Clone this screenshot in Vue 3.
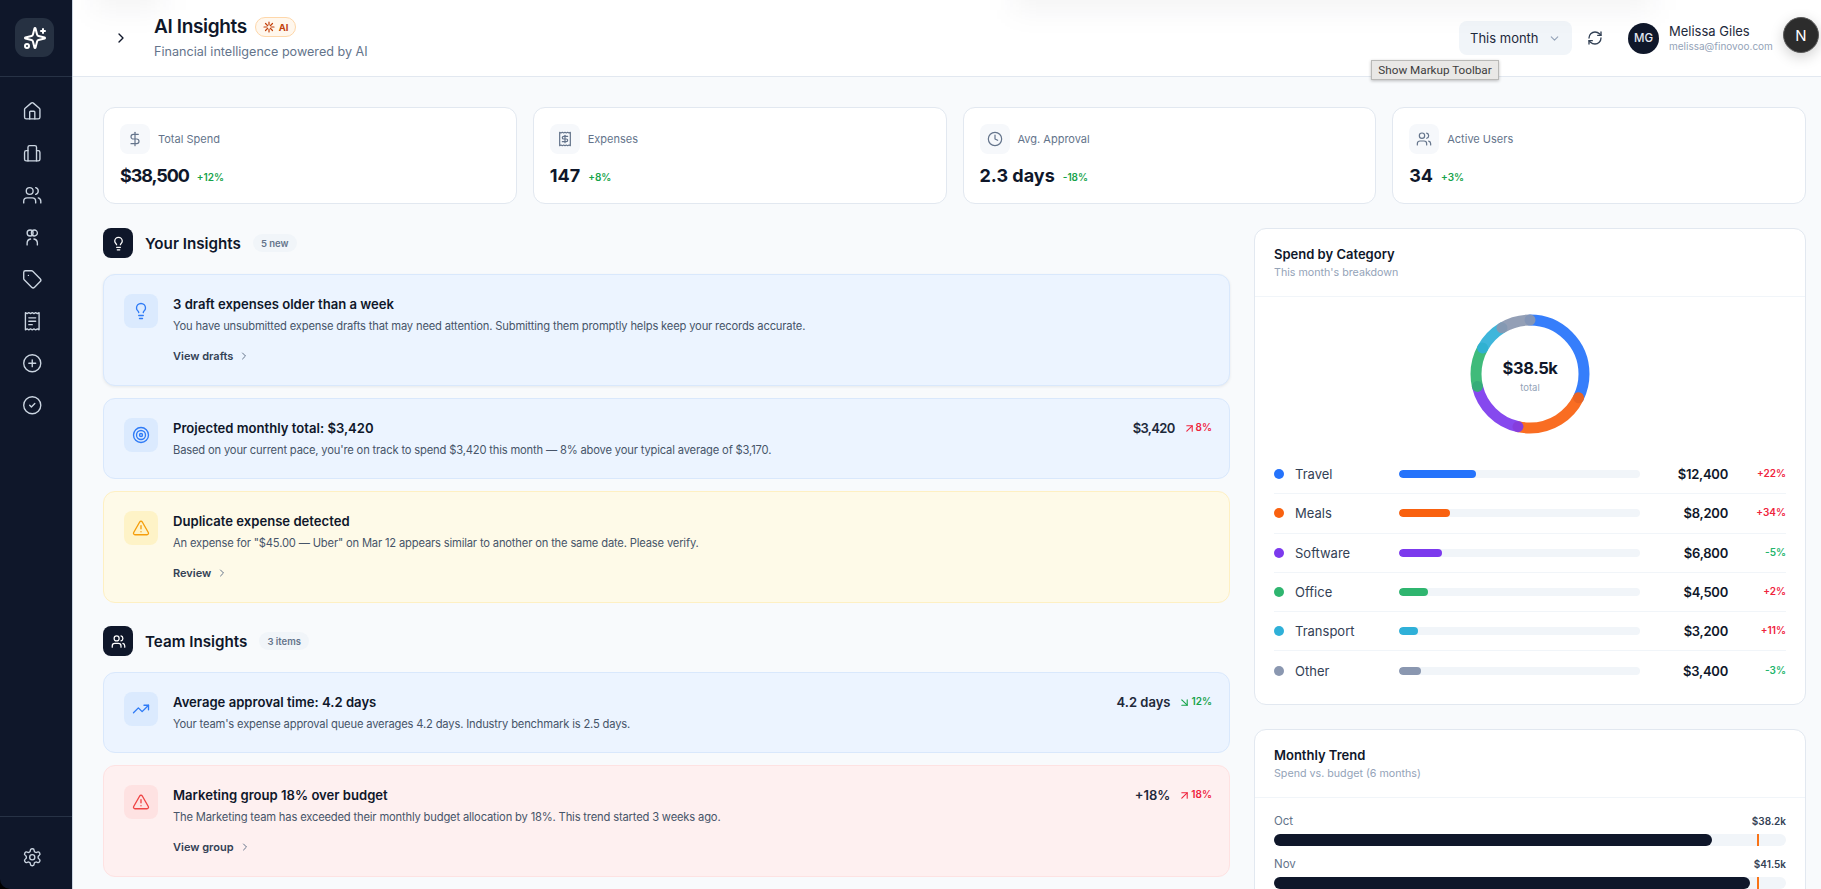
<script setup>
import { h } from 'vue'

const c = (x, y, r) => `M${x - r} ${y}a${r} ${r} 0 1 0 ${2 * r} 0a${r} ${r} 0 1 0 ${-2 * r} 0`
const receiptOutline = 'M4 2v20l2-1 2 1 2-1 2 1 2-1 2 1 2-1 2 1V2l-2 1-2-1-2 1-2-1-2 1-2-1-2 1Z'
const usersPaths = ['M16 21v-2a4 4 0 0 0-4-4H6a4 4 0 0 0-4 4v2', c(9, 7, 4), 'M22 21v-2a4 4 0 0 0-3-3.87', 'M16 3.13a4 4 0 0 1 0 7.75']
const alertPaths = ['m21.73 18-8-14a2 2 0 0 0-3.48 0l-8 14A2 2 0 0 0 4 21h16a2 2 0 0 0 1.73-3', 'M12 9v4', 'M12 17h.01']
const icons = {
  house: ['M15 21v-8a1 1 0 0 0-1-1h-4a1 1 0 0 0-1 1v8', 'M3 10a2 2 0 0 1 .709-1.528l7-5.999a2 2 0 0 1 2.582 0l7 5.999A2 2 0 0 1 21 10v9a2 2 0 0 1-2 2H5a2 2 0 0 1-2-2z'],
  suite: ['M9 3h6a2 2 0 0 1 2 2v16H7V5a2 2 0 0 1 2-2z', 'M7 9H5a2 2 0 0 0-2 2v8a2 2 0 0 0 2 2h2', 'M17 9h2a2 2 0 0 1 2 2v8a2 2 0 0 1-2 2h-2'],
  users: usersPaths,
  groups: [c(9.5, 7, 3.5), c(14.5, 7, 3.5), 'M6 21v-2a5 5 0 0 1 4-4.9', 'M18 21v-2a5 5 0 0 0-4-4.9'],
  tag: ['M12.586 2.586A2 2 0 0 0 11.172 2H4a2 2 0 0 0-2 2v7.172a2 2 0 0 0 .586 1.414l8.704 8.704a2.426 2.426 0 0 0 3.42 0l6.58-6.58a2.426 2.426 0 0 0 0-3.42z', 'M7.5 7.5h.01'],
  receipt: [receiptOutline, 'M16 8H8', 'M16 12H8', 'M12 16H8'],
  plus: [c(12, 12, 10), 'M8 12h8', 'M12 8v8'],
  check: [c(12, 12, 10), 'm9 12 2 2 4-4'],
  settings: ['M12.22 2h-.44a2 2 0 0 0-2 2v.18a2 2 0 0 1-1 1.73l-.43.25a2 2 0 0 1-2 0l-.15-.08a2 2 0 0 0-2.73.73l-.22.38a2 2 0 0 0 .73 2.73l.15.1a2 2 0 0 1 1 1.72v.51a2 2 0 0 1-1 1.74l-.15.09a2 2 0 0 0-.73 2.73l.22.38a2 2 0 0 0 2.73.73l.15-.08a2 2 0 0 1 2 0l.43.25a2 2 0 0 1 1 1.73V20a2 2 0 0 0 2 2h.44a2 2 0 0 0 2-2v-.18a2 2 0 0 1 1-1.73l.43-.25a2 2 0 0 1 2 0l.15.08a2 2 0 0 0 2.73-.73l.22-.39a2 2 0 0 0-.73-2.73l-.15-.08a2 2 0 0 1-1-1.74v-.5a2 2 0 0 1 1-1.74l.15-.09a2 2 0 0 0 .73-2.73l-.22-.38a2 2 0 0 0-2.73-.73l-.15.08a2 2 0 0 1-2 0l-.43-.25a2 2 0 0 1-1-1.73V4a2 2 0 0 0-2-2z', c(12, 12, 3)],
  logo: ['M9.937 15.5A2 2 0 0 0 8.5 14.063l-6.135-1.582a.5.5 0 0 1 0-.962L8.5 9.936A2 2 0 0 0 9.937 8.5l1.582-6.135a.5.5 0 0 1 .963 0L14.063 8.5A2 2 0 0 0 15.5 9.937l6.135 1.581a.5.5 0 0 1 0 .964L15.5 14.063a2 2 0 0 0-1.437 1.437l-1.582 6.135a.5.5 0 0 1-.963 0z', 'M20 3v4', 'M22 5h-4', c(4, 20, 2)],
  burst: ['M12 2v6', 'M12 16v6', 'M2 12h6', 'M16 12h6', 'M5 5l4 4', 'M15 15l4 4', 'M19 5l-4 4', 'M9 15l-4 4'],
  chevronRight: ['m9 18 6-6-6-6'],
  chevronDown: ['m6 9 6 6 6-6'],
  refresh: ['M3 12a9 9 0 0 1 9-9 9.75 9.75 0 0 1 6.74 2.74L21 8', 'M21 3v5h-5', 'M21 12a9 9 0 0 1-9 9 9.75 9.75 0 0 1-6.74-2.74L3 16', 'M8 16H3v5'],
  dollar: ['M12 2v20', 'M17 5H9.5a3.5 3.5 0 0 0 0 7h5a3.5 3.5 0 0 1 0 7H6'],
  receiptDollar: [receiptOutline, 'M16 8h-6a2 2 0 1 0 0 4h4a2 2 0 1 1 0 4H8', 'M12 17.5v-11'],
  clock: [c(12, 12, 10), 'M12 6v6l4 2'],
  bulb: ['M15 14c.2-1 .7-1.7 1.5-2.5 1-.9 1.5-2.2 1.5-3.5A6 6 0 0 0 6 8c0 1 .2 2.2 1.5 3.5.7.7 1.3 1.5 1.5 2.5', 'M9 18h6', 'M10 22h4'],
  target: [c(12, 12, 10), c(12, 12, 6), c(12, 12, 2)],
  alert: alertPaths,
  trending: ['M22 7 13.5 15.5 8.5 10.5 2 17', 'M16 7h6v6'],
  up: ['M7 7h10v10', 'M7 17 17 7'],
  down: ['m7 7 10 10', 'M17 7v10H7']
}
const Icon = (props) => h('svg', { viewBox: '0 0 24 24', fill: 'none', stroke: 'currentColor', 'stroke-linecap': 'round', 'stroke-linejoin': 'round' },
  icons[props.name].map((d) => h('path', { d })))
Icon.props = ['name']

const navItems = ['house', 'suite', 'users', 'groups', 'tag', 'receipt', 'plus', 'check']

const kpis = [
  { icon: 'dollar', label: 'Total Spend', value: '$38,500', delta: '+12%', money: true },
  { icon: 'receiptDollar', label: 'Expenses', value: '147', delta: '+8%' },
  { icon: 'clock', label: 'Avg. Approval', value: '2.3 days', delta: '-18%' },
  { icon: 'users', label: 'Active Users', value: '34', delta: '+3%' }
]

const yourInsights = [
  { tone: 'blue', icon: 'bulb', title: '3 draft expenses older than a week', desc: 'You have unsubmitted expense drafts that may need attention. Submitting them promptly helps keep your records accurate.', link: 'View drafts' },
  { tone: 'blue', icon: 'target', title: 'Projected monthly total: $3,420', desc: "Based on your current pace, you're on track to spend $3,420 this month — 8% above your typical average of $3,170.", value: '$3,420', money: true, trend: '8%', dir: 'up' },
  { tone: 'amber', icon: 'alert', title: 'Duplicate expense detected', desc: 'An expense for "$45.00 — Uber" on Mar 12 appears similar to another on the same date. Please verify.', link: 'Review' }
]
const teamInsights = [
  { tone: 'blue', icon: 'trending', title: 'Average approval time: 4.2 days', desc: "Your team's expense approval queue averages 4.2 days. Industry benchmark is 2.5 days.", value: '4.2 days', trend: '12%', dir: 'down' },
  { tone: 'red', icon: 'alert', title: 'Marketing group 18% over budget', desc: 'The Marketing team has exceeded their monthly budget allocation by 18%. This trend started 3 weeks ago.', value: '+18%', trend: '18%', dir: 'up', link: 'View group' }
]
const sections = [
  { icon: 'bulb', title: 'Your Insights', pill: '5 new', items: yourInsights },
  { icon: 'users', title: 'Team Insights', pill: '3 items', items: teamInsights }
]

const categories = [
  { name: 'Travel', color: '#2573fb', fill: 32, amount: '$12,400', raw: 12400, pct: '+22%', bad: true },
  { name: 'Meals', color: '#f9610f', fill: 21, amount: '$8,200', raw: 8200, pct: '+34%', bad: true },
  { name: 'Software', color: '#7c3aed', fill: 18, amount: '$6,800', raw: 6800, pct: '-5%', bad: false },
  { name: 'Office', color: '#2fb56f', fill: 12, amount: '$4,500', raw: 4500, pct: '+2%', bad: true },
  { name: 'Transport', color: '#2fb0d8', fill: 8, amount: '$3,200', raw: 3200, pct: '+11%', bad: true },
  { name: 'Other', color: '#8a97b0', fill: 9, amount: '$3,400', raw: 3400, pct: '-3%', bad: false }
]
const R = 54
const CIRC = 2 * Math.PI * R
const total = categories.reduce((s, x) => s + x.raw, 0)
let acc = 0
const segments = categories.map((x) => {
  const len = (x.raw / total) * CIRC
  const seg = { color: x.color, dash: `${len} ${CIRC - len}`, offset: -acc }
  acc += len
  return seg
})

const months = [
  { name: 'Oct', value: '$38.2k', fill: 85.5, marker: 94.3 },
  { name: 'Nov', value: '$41.5k', fill: 93, marker: 94.3 }
]
</script>

<template>
  <div class="shell">
    <aside class="sidebar">
      <div class="brand">
        <div class="logo"><Icon name="logo" class="logo-icon" /></div>
      </div>
      <nav class="nav">
        <Icon v-for="n in navItems" :key="n" :name="n" class="nav-icon" />
      </nav>
      <div class="side-foot"><Icon name="settings" class="nav-icon" /></div>
    </aside>

    <div class="page">
      <header class="topbar">
        <span class="smudge smudge-a"></span>
        <span class="smudge smudge-b"></span>
        <Icon name="chevronRight" class="toggle" />
        <div class="heading">
          <div class="title-row">
            <h1>AI Insights</h1>
            <span class="ai-badge"><Icon name="burst" class="burst" />AI</span>
          </div>
          <p>Financial intelligence powered by AI</p>
        </div>
        <div class="top-actions">
          <div class="select">This month<Icon name="chevronDown" class="select-chev" /></div>
          <Icon name="refresh" class="refresh" />
          <div class="avatar">MG</div>
          <div class="who">
            <div class="who-name">Melissa Giles</div>
            <div class="who-mail">melissa@finovoo.com</div>
          </div>
        </div>
      </header>

      <main class="content">
        <section class="kpis">
          <div v-for="k in kpis" :key="k.label" class="kpi">
            <div class="kpi-head">
              <span class="kpi-icon"><Icon :name="k.icon" class="kpi-svg" /></span>
              <span class="kpi-label">{{ k.label }}</span>
            </div>
            <div class="kpi-val">
              <strong :class="{ money: k.money }">{{ k.value }}</strong>
              <span class="kpi-delta">{{ k.delta }}</span>
            </div>
          </div>
        </section>

        <section class="columns">
          <div class="left">
            <div v-for="s in sections" :key="s.title" class="section">
              <div class="sec-head">
                <span class="sec-icon"><Icon :name="s.icon" class="sec-svg" /></span>
                <h2>{{ s.title }}</h2>
                <span class="pill">{{ s.pill }}</span>
              </div>
              <div class="stack">
                <article v-for="it in s.items" :key="it.title" class="insight" :class="it.tone">
                  <span class="ins-icon"><Icon :name="it.icon" class="ins-svg" /></span>
                  <div class="ins-body">
                    <h3>{{ it.title }}</h3>
                    <p>{{ it.desc }}</p>
                    <a v-if="it.link" class="ins-link">{{ it.link }}<Icon name="chevronRight" class="link-chev" /></a>
                  </div>
                  <div v-if="it.value" class="ins-side">
                    <span class="ins-value" :class="{ money: it.money }">{{ it.value }}</span>
                    <span class="ins-trend" :class="it.dir">
                      <Icon :name="it.dir" class="trend-svg" />{{ it.trend }}
                    </span>
                  </div>
                </article>
              </div>
            </div>
          </div>

          <div class="right">
            <div class="panel">
              <div class="panel-head">
                <h3>Spend by Category</h3>
                <p>This month's breakdown</p>
              </div>
              <div class="donut-wrap">
                <div class="donut">
                  <svg viewBox="0 0 120 120" class="donut-svg">
                    <circle
                      v-for="seg in segments"
                      :key="seg.color"
                      cx="60" cy="60" :r="R" fill="none"
                      :stroke="seg.color" stroke-width="11" stroke-linecap="round" opacity="0.92"
                      :stroke-dasharray="seg.dash" :stroke-dashoffset="seg.offset"
                      transform="rotate(-90 60 60)"
                    />
                  </svg>
                  <div class="donut-center">
                    <strong>$38.5k</strong>
                    <span>total</span>
                  </div>
                </div>
              </div>
              <div class="cats">
                <div v-for="x in categories" :key="x.name" class="cat">
                  <span class="dot" :style="{ background: x.color }"></span>
                  <span class="cat-name">{{ x.name }}</span>
                  <span class="track"><span class="fill" :style="{ width: x.fill + '%', background: x.color }"></span></span>
                  <span class="cat-amt">{{ x.amount }}</span>
                  <span class="cat-pct" :class="x.bad ? 'bad' : 'good'">{{ x.pct }}</span>
                </div>
              </div>
            </div>

            <div class="panel">
              <div class="panel-head">
                <h3>Monthly Trend</h3>
                <p>Spend vs. budget (6 months)</p>
              </div>
              <div class="months">
                <div v-for="m in months" :key="m.name" class="month">
                  <div class="month-row">
                    <span class="month-name">{{ m.name }}</span>
                    <span class="month-val">{{ m.value }}</span>
                  </div>
                  <div class="m-track">
                    <span class="m-fill" :style="{ width: m.fill + '%' }"></span>
                    <span class="m-mark" :style="{ left: m.marker + '%' }"></span>
                  </div>
                </div>
              </div>
            </div>
          </div>
        </section>
      </main>
    </div>

    <div class="tooltip">Show Markup Toolbar</div>
    <div class="next-badge">N</div>
  </div>
</template>

<style>
html, body { margin: 0; background: #000; overflow: hidden; }
</style>

<style scoped>
* { box-sizing: border-box; }
svg { display: block; flex: none; }
h1, h2, h3, p { margin: 0; }

.shell {
  position: relative;
  display: flex;
  width: 1821px;
  height: 889px;
  overflow: hidden;
  font-family: Inter, "Liberation Sans", sans-serif;
  color: #0f172a;
  background: #000;
}

.sidebar {
  width: 73px;
  flex: none;
  display: flex;
  flex-direction: column;
  background: #0f172a;
  border-right: 1px solid #cbd5e1;
  border-bottom-left-radius: 10px;
}
.brand {
  height: 77px;
  flex: none;
  display: flex;
  align-items: center;
  padding-left: 15px;
  border-bottom: 1px solid #273245;
}
.logo {
  width: 39px;
  height: 39px;
  margin-top: -1px;
  border-radius: 11px;
  background: #263142;
  display: flex;
  align-items: center;
  justify-content: center;
}
.logo-icon { width: 24px; height: 24px; color: #fff; stroke-width: 2; }
.nav {
  flex: 1;
  display: flex;
  flex-direction: column;
  align-items: center;
  gap: 21.5px;
  padding: 24px 7px 0 0;
}
.nav-icon { width: 20.5px; height: 20.5px; color: #cbd5e1; stroke-width: 1.6; }
.side-foot {
  height: 73px;
  flex: none;
  display: flex;
  justify-content: center;
  padding: 30px 7px 0 0;
  border-top: 1px solid #273245;
}

.page {
  flex: 1;
  min-width: 0;
  display: flex;
  flex-direction: column;
  background: #f8fafc;
}
.topbar {
  position: relative;
  height: 77px;
  flex: none;
  display: flex;
  align-items: center;
  padding-left: 40px;
  background: #fff;
  border-bottom: 1px solid #e2e8f0;
  overflow: hidden;
}
.smudge {
  position: absolute;
  top: -22px;
  height: 32px;
  background: rgba(15, 23, 42, 0.05);
  filter: blur(14px);
}
.smudge-a { left: 20px; width: 70px; }
.smudge-b { left: 940px; width: 640px; }
.toggle { width: 16px; height: 16px; margin-top: -1px; stroke-width: 2; color: #0f172a; }
.heading { margin-left: 25px; margin-top: -2px; }
.title-row { display: flex; align-items: center; gap: 8px; }
h1 { font-size: 19px; line-height: 28px; font-weight: 600; letter-spacing: -0.36px; color: #0f172a; }
.ai-badge {
  display: inline-flex;
  align-items: center;
  gap: 4px;
  height: 20px;
  padding: 0 7px;
  font-size: 9.5px;
  font-weight: 700;
  color: #c2410c;
  background: #fff7ed;
  border: 1px solid #fed7aa;
  border-radius: 10px;
}
.burst { width: 12px; height: 12px; stroke-width: 2.4; color: #c2410c; }
.heading p { margin-top: 2px; font-size: 12.6px; line-height: 18px; color: #64748b; }

.top-actions {
  margin-left: auto;
  display: flex;
  align-items: center;
}
.select {
  width: 113px;
  height: 34px;
  margin-right: 15px;
  padding: 0 11px;
  display: flex;
  align-items: center;
  justify-content: space-between;
  font-size: 13px;
  color: #1e293b;
  background: #f1f5f9;
  border-radius: 8px;
}
.select-chev { width: 13px; height: 13px; stroke-width: 2; color: #94a3b8; }
.refresh { width: 16px; height: 16px; stroke-width: 2; color: #334155; }
.avatar {
  width: 31px;
  height: 31px;
  margin-left: 25px;
  border-radius: 50%;
  background: #0f172a;
  color: #e2e8f0;
  font-size: 11.5px;
  font-weight: 500;
  display: flex;
  align-items: center;
  justify-content: center;
}
.who { margin-left: 10px; width: 152px; }
.who-name { font-size: 13px; line-height: 16px; color: #1e293b; }
.who-mail { font-size: 10px; line-height: 14px; color: #94a3b8; }

.content { padding: 30px 15px 0 30px; }
.kpis { display: grid; grid-template-columns: repeat(4, 1fr); gap: 16px; }
.kpi {
  height: 97px;
  padding: 16px;
  background: #fff;
  border: 1px solid #e2e8f0;
  border-radius: 12px;
}
.kpi-head { display: flex; align-items: center; gap: 8px; }
.kpi-icon {
  width: 30px;
  height: 30px;
  border-radius: 8px;
  background: #f6f8fb;
  display: flex;
  align-items: center;
  justify-content: center;
}
.kpi-svg { width: 16px; height: 16px; stroke-width: 1.8; color: #64748b; }
.kpi-label { font-size: 11px; color: #64748b; }
.kpi-val { display: flex; align-items: center; gap: 8px; margin-top: 8px; height: 26px; }
.kpi-val strong { font-size: 18px; font-weight: 700; color: #0f172a; }
.kpi-val strong.money { letter-spacing: -1.1px; }
.kpi-delta { margin-top: 3px; font-size: 10px; font-weight: 600; color: #16a34a; }

.columns { display: grid; grid-template-columns: 1127px 552px; gap: 24px; margin-top: 24px; align-items: start; }
.section + .section { margin-top: 23px; }
.sec-head { display: flex; align-items: center; height: 30px; margin-bottom: 16px; }
.sec-icon {
  width: 30px;
  height: 30px;
  border-radius: 8px;
  background: #0f172a;
  display: flex;
  align-items: center;
  justify-content: center;
}
.sec-svg { width: 15px; height: 15px; stroke-width: 2; color: #fff; }
h2 { margin-left: 12px; font-size: 15.2px; font-weight: 600; color: #0f172a; }
.pill {
  margin-left: 12px;
  height: 18px;
  padding: 0 8px;
  display: inline-flex;
  align-items: center;
  font-size: 9.5px;
  font-weight: 600;
  color: #64748b;
  background: #f1f5f9;
  border-radius: 9px;
}
.stack { display: flex; flex-direction: column; gap: 12px; }
.insight {
  display: flex;
  align-items: flex-start;
  padding: 19px 17px 19px 20px;
  border: 1px solid;
  border-radius: 12px;
}
.section:first-child .insight:first-child { box-shadow: 0 1px 3px rgba(15, 23, 42, 0.08); }
.insight.blue { background: #ecf4ff; border-color: #d9e8fc; }
.insight.amber { background: #fefae8; border-color: #fef0c3; }
.insight.red { background: #fef0f0; border-color: #fee2e2; }
.ins-icon {
  width: 34px;
  height: 34px;
  flex: none;
  border-radius: 8px;
  display: flex;
  align-items: center;
  justify-content: center;
}
.blue .ins-icon { background: #dbeafe; color: #2f7bf6; }
.amber .ins-icon { background: #fef3c7; color: #f59e0b; }
.red .ins-icon { background: #fee2e2; color: #ef4444; }
.ins-svg { width: 18px; height: 18px; stroke-width: 1.8; }
.ins-body { flex: 1; min-width: 0; margin-left: 15px; }
.ins-body h3 { font-size: 13.1px; line-height: 20px; font-weight: 600; color: #0f172a; }
.ins-body p { margin-top: 3px; font-size: 11.2px; line-height: 18px; letter-spacing: -0.17px; color: #475569; }
.ins-link {
  display: inline-flex;
  align-items: center;
  gap: 5px;
  height: 20px;
  margin-top: 11px;
  font-size: 11px;
  font-weight: 600;
  color: #334155;
}
.link-chev { width: 12px; height: 12px; stroke-width: 2; color: #64748b; }
.ins-side { display: flex; align-items: center; gap: 8px; height: 20px; }
.ins-value { font-size: 13px; font-weight: 600; color: #1e293b; }
.ins-value.money { letter-spacing: -0.7px; }
.ins-trend { display: inline-flex; align-items: center; margin-top: -3px; font-size: 10px; font-weight: 600; }
.ins-trend.up { color: #ef233c; }
.ins-trend.down { color: #16a34a; }
.trend-svg { width: 13px; height: 13px; stroke-width: 2; margin-top: 3px; }

.right { display: flex; flex-direction: column; gap: 24px; }
.panel {
  background: #fff;
  border: 1px solid #e2e8f0;
  border-radius: 12px;
}
.panel-head { height: 68px; padding: 16px 19px 0; border-bottom: 1px solid #f1f5f9; }
.panel-head h3 { font-size: 13px; line-height: 18px; font-weight: 600; color: #0f172a; }
.panel-head p { margin-top: 2px; font-size: 10.7px; line-height: 16px; color: #94a3b8; }
.donut-wrap { display: flex; justify-content: center; padding-top: 17px; height: 158px; }
.donut { position: relative; width: 120px; height: 120px; }
.donut-svg { width: 120px; height: 120px; }
.donut-center {
  position: absolute;
  inset: 0;
  padding-top: 2px;
  display: flex;
  flex-direction: column;
  align-items: center;
  justify-content: center;
}
.donut-center strong { font-size: 16.5px; line-height: 24px; font-weight: 700; letter-spacing: -0.4px; color: #0f172a; }
.donut-center span { margin-top: 2px; font-size: 9.5px; line-height: 12px; color: #94a3b8; }
.cats { padding: 0 19px 13px; }
.cat {
  display: flex;
  align-items: center;
  height: 39.3px;
  border-bottom: 1px solid #f1f5f9;
}
.cat:last-child { border-bottom: 0; }
.dot { width: 10px; height: 10px; border-radius: 50%; flex: none; }
.cat-name { width: 104px; margin-left: 11px; font-size: 13px; color: #334155; flex: none; }
.track { width: 241px; height: 8px; flex: none; border-radius: 4px; background: #f1f5f9; overflow: hidden; display: block; }
.fill { display: block; height: 100%; border-radius: 4px; }
.cat-amt { width: 88px; text-align: right; font-size: 13px; font-weight: 600; letter-spacing: -0.25px; color: #0f172a; flex: none; }
.cat-pct { flex: 1; margin-top: -2px; text-align: right; font-size: 10px; font-weight: 600; }
.cat-pct.bad { color: #ef233c; }
.cat-pct.good { color: #22b56b; }

.months { padding: 16px 19px 60px; display: flex; flex-direction: column; gap: 11px; }
.month-row { display: flex; justify-content: space-between; align-items: center; height: 14px; }
.month-name { font-size: 11.5px; color: #64748b; }
.month-val { font-size: 10px; font-weight: 600; color: #334155; }
.m-track { position: relative; height: 12px; margin-top: 6px; background: #f1f5f9; border-radius: 6px; }
.m-fill { display: block; height: 100%; background: #0f172a; border-radius: 6px; }
.m-mark { position: absolute; top: 0; bottom: 0; width: 2px; background: #f97316; }

.tooltip {
  position: absolute;
  left: 1371px;
  top: 60px;
  width: 128px;
  height: 20px;
  display: flex;
  align-items: center;
  justify-content: center;
  font-family: Roboto, "Liberation Sans", sans-serif;
  font-size: 11.7px;
  color: #3d3d3d;
  background: #e9e8e6;
  border: 1px solid #b9b9b7;
  box-shadow: 0 1px 3px rgba(0, 0, 0, 0.25);
}
.next-badge {
  position: absolute;
  left: 1783px;
  top: 17px;
  width: 36px;
  height: 36px;
  border-radius: 50%;
  display: flex;
  align-items: center;
  justify-content: center;
  color: #fff;
  font-size: 15px;
  font-weight: 400;
  background: #2c2c2c;
  border: 1px solid #5a5a5a;
  box-shadow: 0 4px 14px rgba(0, 0, 0, 0.18);
}
</style>
